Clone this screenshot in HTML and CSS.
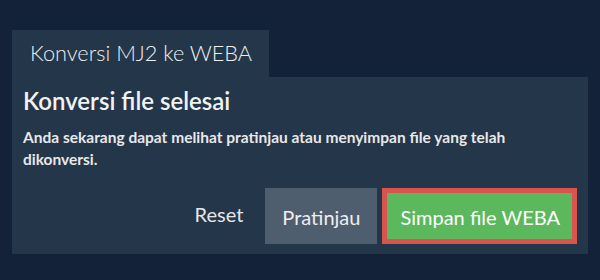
FILE: index.html
```
<!DOCTYPE html>
<html lang="id">
<head>
<meta charset="utf-8">
<title>Konversi MJ2 ke WEBA</title>
<link rel="stylesheet" href="styles.css">
</head>
<body>
<div class="wrap">
  <div class="tab">Konversi MJ2 ke WEBA</div>
  <div class="panel">
    <h2 class="title">Konversi file selesai</h2>
    <p class="desc">Anda sekarang dapat melihat pratinjau atau menyimpan file yang telah dikonversi.</p>
    <div class="actions">
      <button class="btn btn-link">Reset</button>
      <button class="btn btn-gray">Pratinjau</button>
      <button class="btn btn-green">Simpan file WEBA</button>
    </div>
  </div>
</div>
</body>
</html>
```
FILE: styles.css
```
html, body {
  margin: 0;
  padding: 0;
  background: #132238;
  font-family: Lato, "Open Sans", sans-serif;
  color: #eeeeee;
}
.wrap {
  padding: 30px 12px 0 12px;
}
.tab {
  display: inline-block;
  background: #243649;
  height: 47px;
  line-height: 47px;
  padding: 0 17px 0 18px;
  font-size: 21.7px;
  font-weight: 300;
  color: #eeeeee;
}
.panel {
  background: #243649;
  padding: 9px 11px 10px 11px;
}
.title {
  margin: 0;
  font-size: 24px;
  line-height: 29px;
  font-weight: 600;
  color: #f2f2f2;
}
.desc {
  margin: 11px 0 0 0;
  font-size: 15.5px;
  line-height: 22px;
  font-weight: 700;
  color: #e8e8e8;
}
.actions {
  display: flex;
  justify-content: flex-end;
  align-items: stretch;
  margin-top: 18px;
}
.btn {
  font-family: Lato, "Open Sans", sans-serif;
  font-size: 20px;
  font-weight: 400;
  height: 56px;
  padding: 2px 17px 0 17px;
  margin-left: 5px;
  border: 0;
  color: #eeeeee;
  box-sizing: border-box;
}
.btn-link {
  background: transparent;
  font-weight: 400;
  color: #e6e6e6;
  padding: 0 17px 4px 17px;
}
.btn-gray {
  background: #4e5e6f;
}
.btn-green {
  background: #5cb85c;
  border: 5px solid #d9534f;
  padding: 2px 12px 0 13px;
  color: #ffffff;
}
```
